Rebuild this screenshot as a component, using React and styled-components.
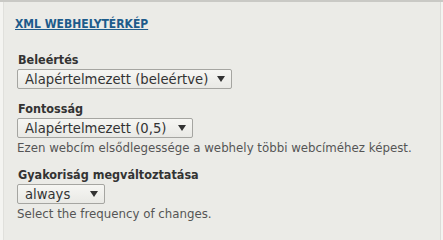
import React from "react";
import styled, { createGlobalStyle } from "styled-components";

const GlobalStyle = createGlobalStyle`
html, body {
  margin: 0;
  padding: 0;
  background: #f4f4f1;
}
body {
  font-family: "DejaVu Sans", Verdana, sans-serif;
  color: #333;
}
`;

const Frame = styled.div`
  width: 443px;
  height: 240px;
  box-sizing: border-box;
  border-top: 2px solid #c9c9c5;
  padding: 0 2px 0 3px;
`;

const Panel = styled.section`
  height: 100%;
  box-sizing: border-box;
  background: #ebebe7;
  border-left: 1px solid #e0e0dc;
  border-right: 1px solid #dcdcd8;
  padding: 11px 12px 0 11px;
`;

const Title = styled.a`
  display: inline-block;
  font-family: "DejaVu Sans Condensed", "DejaVu Sans", sans-serif;
  font-stretch: condensed;
  font-weight: bold;
  font-size: 12px;
  line-height: 16px;
  color: #1d5b8b;
  text-decoration: underline;
  text-transform: uppercase;
  cursor: pointer;
`;

const Form = styled.div`
  display: flex;
  flex-direction: column;
  padding-top: 20px;
  padding-left: 2px;
`;

const Item = styled.div`
  display: flex;
  flex-direction: column;
  align-items: flex-start;
  margin-bottom: ${(p) => p.$gap || 12}px;
`;

const Label = styled.label`
  font-family: "DejaVu Sans Condensed", "DejaVu Sans", sans-serif;
  font-stretch: condensed;
  font-size: 12.5px;
  font-weight: bold;
  line-height: 16px;
  color: #333;
  margin-bottom: 1px;
  padding-left: 1px;
`;

const Select = styled.div`
  display: inline-flex;
  align-items: center;
  justify-content: space-between;
  height: 20px;
  box-sizing: border-box;
  width: ${(p) => p.$width}px;
  padding: 0 6px 0 7px;
  border: 1px solid #a5a5a1;
  border-radius: 2px;
  background: linear-gradient(#f6f6f3, #e9e9e5);
  font-size: 13.2px;
  color: #333;
  white-space: nowrap;
`;

const Arrow = styled.span`
  flex: none;
  width: 0;
  height: 0;
  border-left: 4px solid transparent;
  border-right: 4px solid transparent;
  border-top: 6px solid #333;
  margin-left: 8px;
`;

const Description = styled.div`
  font-size: 11.8px;
  line-height: 14px;
  color: #555;
  margin-top: 3px;
`;

function Field({ label, value, width, description, gap }) {
  return (
    <Item $gap={gap}>
      <Label>{label}</Label>
      <Select $width={width}>
        <span>{value}</span>
        <Arrow />
      </Select>
      {description && <Description>{description}</Description>}
    </Item>
  );
}

export default function App() {
  return (
    <>
      <GlobalStyle />
      <Frame>
        <Panel>
          <Title>XML webhelytérkép</Title>
          <Form>
            <Field label="Beleértés" value="Alapértelmezett (beleértve)" width={215} />
            <Field
              label="Fontosság"
              value="Alapértelmezett (0,5)"
              width={176}
              description="Ezen webcím elsődlegessége a webhely többi webcíméhez képest."
              gap={12}
            />
            <Field
              label="Gyakoriság megváltoztatása"
              value="always"
              width={88}
              description="Select the frequency of changes."
            />
          </Form>
        </Panel>
      </Frame>
    </>
  );
}
